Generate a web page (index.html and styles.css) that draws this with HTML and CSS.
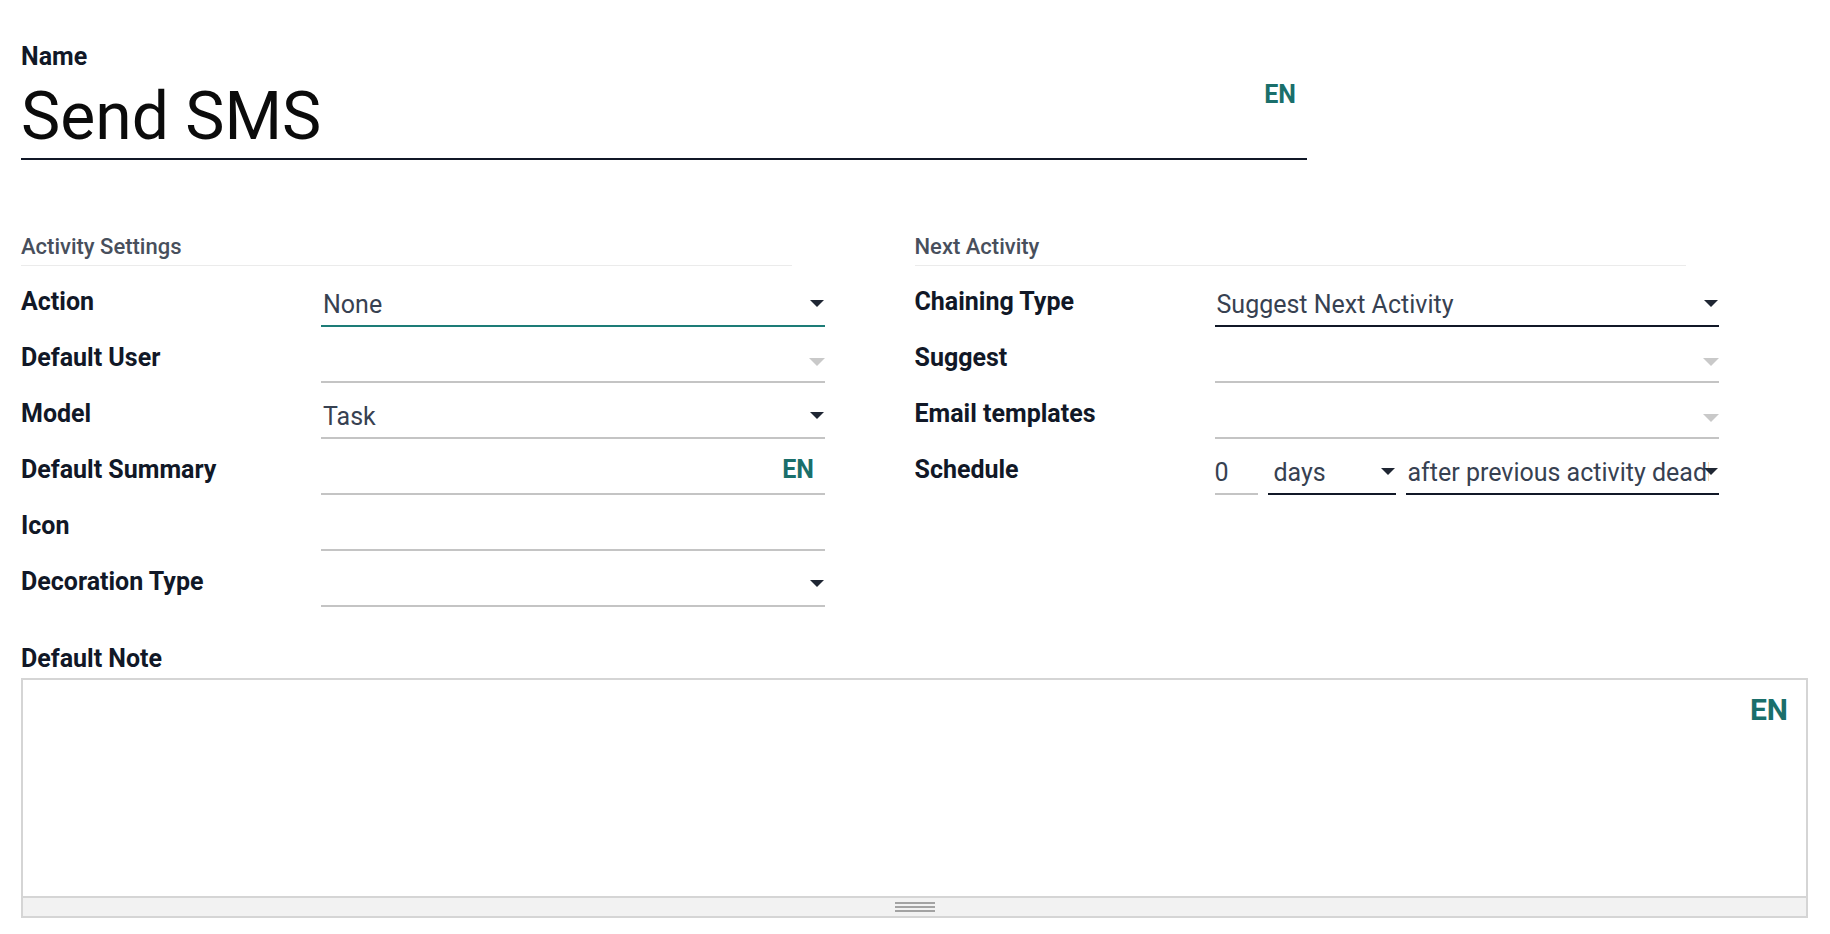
FILE: index.html
```html
<!DOCTYPE html>
<html lang="en">
<head>
    <meta charset="UTF-8">
    <meta name="viewport" content="width=device-width, initial-scale=1.0">
    <title>Send SMS - Activity Type</title>
    <link rel="stylesheet" href="styles.css">
</head>

<body>
    <div class="form-sheet">
        <!-- Title -->
        <div class="title-block">
            <div class="title-label">Name</div>
            <div class="title-field">
                <span class="title-value">Send SMS</span>
                <span class="lang lang-title">EN</span>
            </div>
        </div>

        <!-- Groups -->
        <div class="groups">
            <div class="group">
                <div class="group-title">Activity Settings</div>
                <div class="group-rows">
                    <div class="row">
                        <div class="label">Action</div>
                        <div class="field focused">None<span class="caret"></span></div>
                    </div>
                    <div class="row">
                        <div class="label">Default User</div>
                        <div class="field"><span class="caret caret-off"></span></div>
                    </div>
                    <div class="row">
                        <div class="label">Model</div>
                        <div class="field">Task<span class="caret"></span></div>
                    </div>
                    <div class="row">
                        <div class="label">Default Summary</div>
                        <div class="field"><span class="lang lang-field">EN</span></div>
                    </div>
                    <div class="row">
                        <div class="label">Icon</div>
                        <div class="field"></div>
                    </div>
                    <div class="row">
                        <div class="label">Decoration Type</div>
                        <div class="field"><span class="caret"></span></div>
                    </div>
                </div>
            </div>

            <div class="group">
                <div class="group-title">Next Activity</div>
                <div class="group-rows">
                    <div class="row">
                        <div class="label">Chaining Type</div>
                        <div class="field required">Suggest Next Activity<span class="caret"></span></div>
                    </div>
                    <div class="row">
                        <div class="label">Suggest</div>
                        <div class="field"><span class="caret caret-off"></span></div>
                    </div>
                    <div class="row">
                        <div class="label">Email templates</div>
                        <div class="field"><span class="caret caret-off"></span></div>
                    </div>
                    <div class="row">
                        <div class="label">Schedule</div>
                        <div class="schedule">
                            <div class="field sched-num">0</div>
                            <div class="field required sched-unit">days<span class="caret"></span></div>
                            <div class="field required sched-from"><span class="clip">after previous activity deadline</span><span class="caret"></span></div>
                        </div>
                    </div>
                </div>
            </div>
        </div>

        <!-- Note -->
        <div class="note">
            <div class="label">Default Note</div>
            <div class="editor">
                <div class="editor-body">
                    <span class="lang lang-note">EN</span>
                </div>
                <div class="editor-resize"><span class="grip"></span></div>
            </div>
        </div>
    </div>
</body>
</html>
```

FILE: styles.css
```css
body, html {
    margin: 0;
    padding: 0;
    background-color: #ffffff;
    font-family: Roboto, "Liberation Sans", Arial, sans-serif;
    color: #111827;
}

.form-sheet {
    padding: 42px 22px 0 21px;
}

/* title */
.title-label {
    font-size: 25px;
    line-height: 30px;
    font-weight: 700;
    color: #111827;
}

.title-field {
    position: relative;
    width: 1286px;
    margin-top: 5px;
    padding-bottom: 1px;
    border-bottom: 2px solid #111827;
}

.title-value {
    display: block;
    font-size: 66px;
    line-height: 80px;
    color: #0b0b0b;
}

.lang {
    position: absolute;
    font-weight: 700;
    color: #1a6f6b;
}

.lang-title {
    top: 3px;
    right: 11px;
    font-size: 25px;
    line-height: 30px;
}

.lang-field {
    top: 0;
    right: 11px;
    font-size: 25px;
    line-height: 30px;
}

.lang-note {
    top: 12px;
    right: 18px;
    font-size: 30px;
    line-height: 36px;
}

/* groups */
.groups {
    display: grid;
    grid-template-columns: 1fr 1fr;
    margin-top: 74px;
}

.group-title {
    width: 771px;
    font-size: 22px;
    line-height: 26px;
    font-weight: 500;
    color: #484f5c;
    padding-bottom: 5px;
    border-bottom: 1px solid #ebebeb;
}

.group-rows {
    display: flex;
    flex-direction: column;
    gap: 16px;
    margin-top: 21px;
}

.row {
    display: grid;
    grid-template-columns: 300px 504px;
    align-items: start;
}

.label {
    font-size: 25px;
    line-height: 30px;
    font-weight: 700;
    color: #111827;
}

.field {
    position: relative;
    height: 30px;
    padding: 3px 0 5px 2px;
    font-size: 25px;
    line-height: 30px;
    color: #374151;
    border-bottom: 2px solid #c4c4c4;
}

.field.focused {
    border-bottom-color: #1d7c77;
}

.field.required {
    border-bottom-color: #111827;
}

.caret {
    position: absolute;
    top: 13px;
    right: 1px;
    width: 0;
    height: 0;
    border-left: 7px solid transparent;
    border-right: 7px solid transparent;
    border-top: 7px solid #1f2633;
}

.caret-off {
    top: 15px;
    right: 0;
    border-left-width: 8px;
    border-right-width: 8px;
    border-top: 8px solid #c9c9c9;
}

/* schedule */
.schedule {
    display: flex;
    gap: 10px;
}

.schedule .field {
    flex-shrink: 0;
    box-sizing: border-box;
    height: 40px;
}

.sched-num {
    width: 43px;
    padding-left: 0;
}

.sched-unit {
    width: 128px;
    padding-left: 6px;
}

.sched-from {
    width: 313px;
    min-width: 0;
    padding-left: 2px;
}

.clip {
    display: block;
    overflow: hidden;
    white-space: nowrap;
    margin-right: 10px;
}

/* note */
.note {
    margin-top: 37px;
}

.note .label {
    margin-bottom: 4px;
}

.editor {
    border: 2px solid #d5d5d5;
}

.editor-body {
    position: relative;
    height: 216px;
}

.editor-resize {
    display: flex;
    justify-content: center;
    height: 18px;
    background-color: #f2f2f2;
    border-top: 2px solid #d5d5d5;
}

.grip {
    width: 40px;
    height: 10px;
    margin-top: 4px;
    background: repeating-linear-gradient(#a3a3a3 0 2px, transparent 2px 4px);
}
```
